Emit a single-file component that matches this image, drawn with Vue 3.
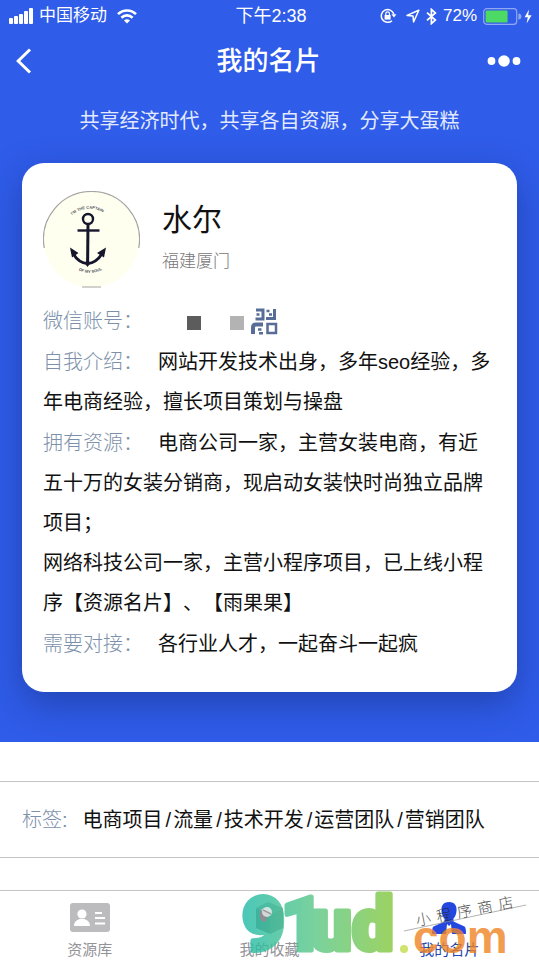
<script setup>
import { ref } from 'vue'

const card = {
  name: '水尔',
  city: '福建厦门',
  intro: '网站开发技术出身，多年seo经验，多年电商经验，擅长项目策划与操盘',
  resources: [
    '电商公司一家，主营女装电商，有近五十万的女装分销商，现启动女装快时尚独立品牌项目；',
    '网络科技公司一家，主营小程序项目，已上线小程序【资源名片】、【雨果果】'
  ],
  need: '各行业人才，一起奋斗一起疯'
}

const tags = ['电商项目', '流量', '技术开发', '运营团队', '营销团队']

const tabs = [
  { key: 'library', label: '资源库' },
  { key: 'favorites', label: '我的收藏' },
  { key: 'mine', label: '我的名片' }
]
const activeTab = ref('mine')
</script>

<template>
  <div class="page">
    <div class="hero">
      <!-- Status bar -->
      <div class="status-bar">
        <div class="status-side">
          <svg width="24" height="16" viewBox="0 0 24 16" fill="#fff">
            <rect x="0" y="10" width="4" height="6" rx="1" />
            <rect x="5" y="8" width="4" height="8" rx="1" />
            <rect x="10" y="6" width="4" height="10" rx="1" />
            <rect x="15" y="3" width="4" height="13" rx="1" />
            <rect x="20" y="0" width="4" height="16" rx="1" />
          </svg>
          <span>中国移动</span>
          <svg class="wifi" width="20" height="15" viewBox="0 0 20 15" fill="none" stroke="#fff" stroke-width="2.6">
            <path d="M1 5.2C6 .2 14 .2 19 5.2" />
            <path d="M4.4 8.7c3.2-3.1 8-3.1 11.2 0" />
            <path d="M7 11.4c1.7-1.5 4.3-1.5 6 0L10 14.6z" fill="#fff" stroke="none" />
          </svg>
        </div>
        <span class="time">下午2:38</span>
        <div class="status-side right">
          <svg width="17" height="16" viewBox="0 0 17 16" fill="none" stroke="#fff" stroke-width="1.5">
            <path d="M13.8 6A6.4 6.4 0 1 0 12 12.7" />
            <path d="M11.4 6.2h5L14 9.6z" fill="#fff" stroke="none" />
            <rect x="4.6" y="7" width="6" height="4.6" fill="#fff" stroke="none" />
            <path d="M5.8 7.2V5.6a1.8 1.8 0 0 1 3.6 0v1.6" stroke-width="1.2" />
          </svg>
          <svg class="location" width="14" height="14" viewBox="0 0 14 14" fill="none" stroke="#fff" stroke-width="1.5" stroke-linejoin="round">
            <path d="M12.8 1.2 1 6.4l6 .6.6 6z" />
          </svg>
          <svg width="11" height="17" viewBox="0 0 11 17" fill="none" stroke="#fff" stroke-width="1.7">
            <path d="m1 4.6 8.4 7.4-4 3.6V1.4l4 3.6L1 12.4" />
          </svg>
          <span>72%</span>
          <svg width="50" height="17" viewBox="0 0 50 17">
            <rect x=".7" y=".7" width="33" height="15.6" rx="3" fill="none" stroke="#8fa8f3" stroke-width="1.2" />
            <rect x="2.6" y="2.6" width="22" height="11.8" rx="1" fill="#4cd964" />
            <path d="M35.4 5.5a3 3 0 0 1 0 6z" fill="#8fa8f3" />
            <path d="M46 1.5 41.6 9.3h3.2L43.6 15.5l5-8.3h-3.4z" fill="#fff" />
          </svg>
        </div>
      </div>

      <!-- Navigation -->
      <header class="nav-bar">
        <button class="icon-btn" aria-label="返回">
          <svg width="16" height="26" viewBox="0 0 16 26" fill="none" stroke="#fff" stroke-width="3">
            <path d="M14 1.5 2.2 13 14 24.5" />
          </svg>
        </button>
        <h1>我的名片</h1>
        <button class="icon-btn more" aria-label="更多">
          <svg width="34" height="12" viewBox="0 0 34 12" fill="#fff">
            <circle cx="4.5" cy="6" r="3.9" />
            <circle cx="17" cy="6" r="5.8" />
            <circle cx="29.5" cy="6" r="3.9" />
          </svg>
        </button>
      </header>

      <p class="slogan">共享经济时代，共享各自资源，分享大蛋糕</p>

      <!-- Business card -->
      <section class="card">
        <div class="profile">
          <svg class="avatar" width="97" height="97" viewBox="0 0 97 97">
            <defs>
              <path id="arcTop" d="M29 24Q46 11 66 25" />
              <path id="arcBottom" d="M32 77Q46 87 62 77" />
            </defs>
            <circle cx="48.5" cy="48.5" r="48" fill="#fffff0" />
            <path d="M1.26 57A48 48 0 1 1 95.74 57M39 96h19" fill="none" stroke="#a5a4a2" stroke-width="1.2" />
            <g fill="none" stroke="#15152b">
              <circle cx="45" cy="28" r="5" stroke-width="2.4" />
              <path d="M45 33 44.6 73" stroke-width="3" />
              <path d="M34.5 39.5h22" stroke-width="2.4" />
              <path d="M29 60c3 7 8 12 15.6 12.6C52 72 57 67 60.5 60" stroke-width="2.8" />
            </g>
            <path d="M27 56.5 35.5 62 29 66.5zM63 56.5 54 62l7 4.5zM41.5 72l3-3 3 3-3 4z" fill="#15152b" />
            <text class="motto"><textPath href="#arcTop">I'M THE CAPTAIN</textPath></text>
            <text class="motto"><textPath href="#arcBottom" startOffset="4">OF MY SOUL</textPath></text>
          </svg>
          <div class="who">
            <h2>{{ card.name }}</h2>
            <p>{{ card.city }}</p>
          </div>
        </div>

        <div class="field wechat">
          <span class="label">微信账号：</span>
          <i class="block dark"></i>
          <i class="block light"></i>
          <button class="icon-btn" aria-label="二维码">
            <svg width="27" height="27" viewBox="0 0 27 27" fill="none" stroke="#586c98" stroke-width="3">
              <path d="M5 2h7v9H4.5M23.5 1v9.5H15" />
              <path d="M5.500 6.500h3M15.500 3h3M18 6.500h3" stroke-width="2.5" />
              <path d="M2 26v-6.500q0-3 3-3h7" stroke-width="4" />
              <path d="M7 21.500h3.500M8 25.300h4" stroke-width="2.5" />
              <path d="M16.500 16H25v9h-8.500z" stroke-width="2.5" />
            </svg>
          </button>
        </div>
        <div class="field">
          <span class="label">自我介绍：</span>{{ card.intro }}
        </div>
        <div class="field">
          <span class="label">拥有资源：</span>{{ card.resources[0] }}<br />{{ card.resources[1] }}
        </div>
        <div class="field">
          <span class="label">需要对接：</span>{{ card.need }}
        </div>
      </section>
    </div>

    <section class="tags">
      <span class="tags-label">标签:</span>
      <span><template v-for="(tag, i) in tags" :key="tag"><span v-if="i" class="slash">/</span>{{ tag }}</template></span>
    </section>

    <!-- Tab bar -->
    <nav class="tab-bar">
      <button
        v-for="tab in tabs"
        :key="tab.key"
        class="tab"
        :class="{ active: activeTab === tab.key }"
        @click="activeTab = tab.key">
        <svg v-if="tab.key === 'library'" width="40" height="32" viewBox="0 0 40 32">
          <rect y="1" width="40" height="29" rx="3" fill="#bcbcbe" />
          <circle cx="12" cy="12" r="4.6" fill="#fff" />
          <path d="M4 24c0-5 4-6 5.5-7h5c1.5 1 5.5 2 5.5 7z" fill="#fff" />
          <path d="M25 11h7M25 16h10M25 21.5h10" stroke="#fff" stroke-width="2" />
        </svg>
        <svg v-else-if="tab.key === 'favorites'" width="32" height="32" viewBox="0 0 32 32">
          <path d="M2 6 14 0l15 6-13 6z" fill="#b4b4b6" />
          <path d="M2 6l14 6v20L2 26z" fill="#8e8e92" />
          <path d="m16 12 13-6v20l-13 6z" fill="#a59fa2" />
        </svg>
        <svg v-else width="36" height="32" viewBox="0 0 36 32" fill="#2447e0">
          <path d="M18 0c6 0 8 4 7.500 9-.3 3.500-1.500 6-3 7.500v3l11 5q1.500.8 1.500 7.500H1Q1 25.300 2.500 24.500l11-5v-3c-1.500-1.500-2.700-4-3-7.500C10 4 12 0 18 0z" />
          <path d="m16 22 2 2 2-2 1 10h-6z" fill="#fff" />
        </svg>
        <span>{{ tab.label }}</span>
      </button>

      <svg class="watermark" width="290" height="70" viewBox="0 0 290 70" aria-hidden="true">
        <defs>
          <linearGradient id="brand" gradientUnits="userSpaceOnUse" x1="2" y1="0" x2="152" y2="0">
            <stop offset="0" stop-color="#1fbaa8" />
            <stop offset=".5" stop-color="#5ac784" />
            <stop offset="1" stop-color="#84c83c" />
          </linearGradient>
        </defs>
        <text class="brand" x="2 41 70 112" y="60">91ud</text>
        <circle cx="27" cy="22" r="5" fill="#fff" fill-opacity=".8" />
        <path d="m23 20 8 4" stroke="#999" stroke-width="1.5" />
        <circle cx="164" cy="59" r="4" fill="#c3de4a" />
        <text class="domain" x="173" y="63">com</text>
        <path d="M164 41 286 15" stroke="#8a8a8a" stroke-width=".8" />
        <text class="store" x="177 198 219 240 261" y="36" transform="rotate(-11 177 36)">小程序商店</text>
      </svg>
    </nav>
  </div>
</template>

<style>
body {
  margin: 0;
  background: #fff;
}
</style>

<style scoped>
.page {
  display: flex;
  flex-direction: column;
  min-height: 100vh;
  font-family: 'Liberation Sans', 'Noto Sans CJK SC', sans-serif;
  font-size: 20px;
  color: #111;
  text-spacing-trim: space-all;
}
h1, h2, p { margin: 0; }
button {
  border: none;
  background: none;
  padding: 0;
  font: inherit;
  cursor: pointer;
}
svg { display: block; }

.hero {
  background: #2f5ce9;
  color: #fff;
  padding-bottom: 50px;
}

.status-bar {
  display: grid;
  grid-template-columns: 1fr auto 1fr;
  align-items: center;
  height: 30px;
  padding: 0 6px 0 9px;
  font-size: 17px;
  line-height: 32px;
}
.status-side {
  display: flex;
  align-items: center;
  gap: 6px;
}
.status-side.right { justify-content: flex-end; }
.wifi { margin-left: 4px; }
.location { margin-left: 3px; }
.time { font-size: 18px; }

.nav-bar {
  display: grid;
  grid-template-columns: 1fr auto 1fr;
  align-items: center;
  height: 62px;
  padding: 0 18px 0 16px;
}
.nav-bar h1 {
  font-size: 26px;
  font-weight: 500;
  line-height: 40px;
}
.more { justify-self: end; }

.slogan {
  padding: 9px 0 22px;
  text-align: center;
  line-height: 40px;
  color: #e3eaff;
}

.card {
  margin: 0 22px;
  padding: 28px 21px 27px;
  border-radius: 22px;
  background: #fff;
  color: #111;
  box-shadow: 0 12px 36px rgba(20, 40, 110, 0.45);
}
.profile {
  display: flex;
  gap: 22px;
  margin-bottom: 13px;
}
.who { padding-top: 7px; }
.who h2 {
  font-size: 30px;
  font-weight: 400;
  line-height: 44px;
}
.who p {
  margin-top: 7px;
  font-size: 17px;
  font-weight: 300;
  line-height: 26px;
  color: #777;
}
.motto {
  font-family: 'Liberation Sans', sans-serif;
  font-size: 4px;
  font-weight: 700;
  fill: #55555f;
}

.field {
  margin-bottom: 1px;
  line-height: 40px;
}
.label {
  margin-right: 15px;
  font-weight: 300;
  color: #7c90aa;
}
.wechat {
  display: flex;
  align-items: center;
}
.block {
  width: 14px;
  height: 14px;
  margin: 4px 29px 0 0;
  background: #5c5c5c;
}
.block.dark { margin-left: 29px; }
.block.light {
  margin-right: 7px;
  background: #b3b3b3;
}

.tags {
  display: flex;
  gap: 15px;
  margin: 39px 0 32px;
  padding: 18px 22px 17px;
  border-top: 1px solid #c4c4c4;
  border-bottom: 1px solid #c4c4c4;
  line-height: 40px;
}
.tags-label {
  font-weight: 300;
  color: #7c90aa;
}
.slash { padding: 0 2px 0 3px; }

.tab-bar {
  position: relative;
  display: flex;
  margin-top: auto;
  border-top: 1px solid #c4c4c4;
}
.tab {
  flex: 1;
  display: flex;
  flex-direction: column;
  align-items: center;
  gap: 5px;
  padding: 11px 0 0;
  font-size: 15px;
  line-height: 21px;
  color: #929297;
}
.tab.active { color: #2447b0; }

/* Promo mark laid over the tab bar */
.watermark {
  position: absolute;
  right: 9px;
  bottom: 0;
  opacity: 0.8;
  pointer-events: none;
}
.brand {
  font-family: Roboto, sans-serif;
  font-size: 74px;
  font-weight: 900;
  fill: url(#brand);
  stroke: url(#brand);
  stroke-width: 5px;
  stroke-linejoin: round;
}
.domain {
  font-family: 'Liberation Sans', sans-serif;
  font-size: 46px;
  font-weight: 700;
  fill: #f08424;
}
.store {
  font-size: 15px;
  font-weight: 300;
  fill: #222;
}
</style>
